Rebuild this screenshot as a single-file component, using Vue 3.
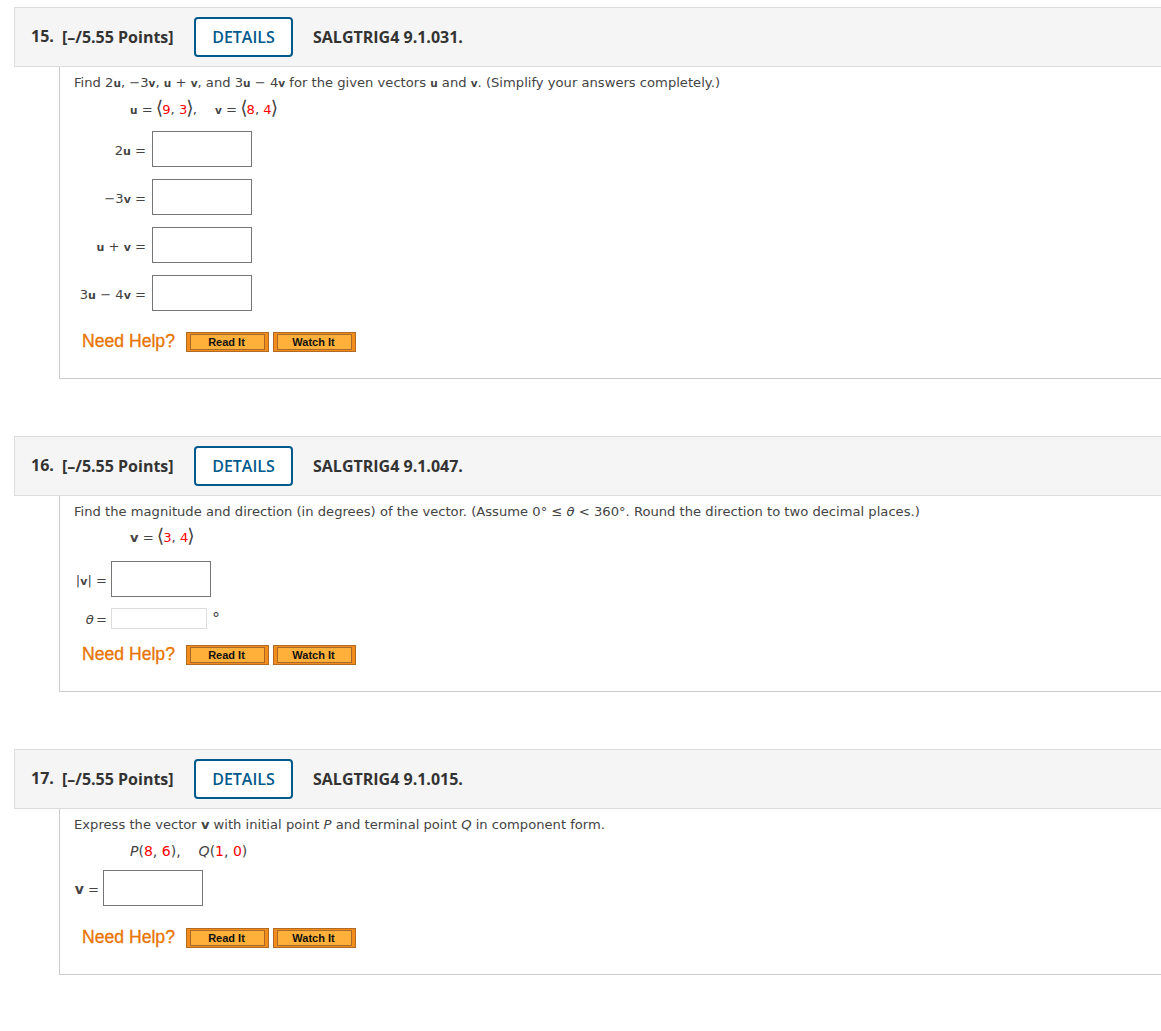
<template>
  <div class="page">
    <section class="question">
      <header class="q-head">
        <span class="q-num">15.</span>
        <span class="q-points">[–/5.55 Points]</span>
        <button class="details-btn">DETAILS</button>
        <span class="q-code">SALGTRIG4 9.1.031.</span>
      </header>
      <div class="q-body">
        <p class="prompt">Find 2<b>u</b>, −3<b>v</b>, <b>u</b> + <b>v</b>, and 3<b>u</b> − 4<b>v</b> for the given vectors <b>u</b> and <b>v</b>. (Simplify your answers completely.)</p>
        <p class="given first">
          <b>u</b> = <span class="ang">⟨</span><em>9</em>, <em>3</em><span class="ang">⟩</span>,<span class="sp"></span><b>v</b> = <span class="ang">⟨</span><em>8</em>, <em>4</em><span class="ang">⟩</span>
        </p>
        <div class="answers a15">
          <div class="row">
            <label class="lbl">2<b>u</b> =</label>
            <span class="box"></span>
          </div>
          <div class="row">
            <label class="lbl">−3<b>v</b> =</label>
            <span class="box"></span>
          </div>
          <div class="row">
            <label class="lbl"><b>u</b> + <b>v</b> =</label>
            <span class="box"></span>
          </div>
          <div class="row">
            <label class="lbl">3<b>u</b> − 4<b>v</b> =</label>
            <span class="box"></span>
          </div>
        </div>
        <div class="help">
          <span class="help-text">Need Help?</span>
          <button class="help-btn"><span>Read It</span></button>
          <button class="help-btn"><span>Watch It</span></button>
        </div>
      </div>
    </section>

    <section class="question">
      <header class="q-head">
        <span class="q-num">16.</span>
        <span class="q-points">[–/5.55 Points]</span>
        <button class="details-btn">DETAILS</button>
        <span class="q-code">SALGTRIG4 9.1.047.</span>
      </header>
      <div class="q-body">
        <p class="prompt">Find the magnitude and direction (in degrees) of the vector. (Assume 0° ≤ <i>θ</i> &lt; 360°. Round the direction to two decimal places.)</p>
        <p class="given">
          <b class="big">v</b> = <span class="ang">⟨</span><em>3</em>, <em>4</em><span class="ang">⟩</span>
        </p>
        <div class="answers a16">
          <div class="row">
            <label class="lbl">|<b>v</b>| =</label>
            <span class="box"></span>
          </div>
          <div class="row theta">
            <label class="lbl"><i>θ</i> =</label>
            <span class="box small"></span>
            <span class="deg">°</span>
          </div>
        </div>
        <div class="help">
          <span class="help-text">Need Help?</span>
          <button class="help-btn"><span>Read It</span></button>
          <button class="help-btn"><span>Watch It</span></button>
        </div>
      </div>
    </section>

    <section class="question">
      <header class="q-head">
        <span class="q-num">17.</span>
        <span class="q-points">[–/5.55 Points]</span>
        <button class="details-btn">DETAILS</button>
        <span class="q-code">SALGTRIG4 9.1.015.</span>
      </header>
      <div class="q-body">
        <p class="prompt">Express the vector <b class="big">v</b> with initial point <i>P</i> and terminal point <i>Q</i> in component form.</p>
        <p class="given wide">
          <i>P</i>(<em>8</em>, <em>6</em>),<span class="sp"></span><i>Q</i>(<em>1</em>, <em>0</em>)
        </p>
        <div class="answers a17">
          <div class="row">
            <label class="lbl"><b class="big">v</b> =</label>
            <span class="box"></span>
          </div>
        </div>
        <div class="help">
          <span class="help-text">Need Help?</span>
          <button class="help-btn"><span>Read It</span></button>
          <button class="help-btn"><span>Watch It</span></button>
        </div>
      </div>
    </section>
  </div>
</template>

<script setup>
</script>

<style scoped>
.page {
  padding: 7px 0 56px 14px;
  overflow: hidden;
  color: #444;
  font-family: "DejaVu Sans", Verdana, sans-serif;
  font-size: 13.13px;
}

.question {
  margin-bottom: 57px;
}

.question:last-child {
  margin-bottom: 0;
}

.q-head {
  display: flex;
  align-items: center;
  height: 60px;
  box-sizing: border-box;
  margin-right: -4px;
  padding-left: 16px;
  background: #f5f5f5;
  border: 1px solid #ddd;
  font-family: "Open Sans", sans-serif;
  font-size: 16px;
  font-weight: 700;
  color: #333;
}

.q-num {
  width: 31px;
  margin-top: -2px;
}

.q-points {
  width: 132px;
}

.details-btn {
  width: 99px;
  height: 40px;
  padding: 0;
  background: #fff;
  border: 2px solid #005a8c;
  border-radius: 4px;
  color: #005a8c;
  font: inherit;
  font-weight: 600;
}

.q-code {
  margin-left: 20px;
}

.q-body {
  margin-left: 45px;
  margin-right: -4px;
  padding-left: 14px;
  border-left: 1px solid #ccc;
  border-bottom: 1px solid #ccc;
}

.prompt {
  margin: 0;
  padding-top: 8px;
  line-height: 16px;
  white-space: nowrap;
}

.given {
  margin: 0;
  padding: 7px 0 0 56px;
  height: 22px;
  line-height: 22px;
  white-space: nowrap;
}

.given.first {
  padding-top: 8px;
}

.given.wide {
  font-size: 14px;
}

.prompt b,
.given b {
  font-size: 10.5px;
}

.lbl b {
  font-size: 11px;
}

b.big {
  font-size: 13px !important;
}

.lbl b.big {
  font-size: 14px !important;
}

em {
  font-style: normal;
  color: #f00;
}

.ang {
  font-size: 19px;
  line-height: 16px;
  margin: 0 -1px;
}

.sp {
  display: inline-block;
  width: 18px;
}

.answers {
  display: flex;
  flex-direction: column;
  gap: 12px;
  padding-top: 10px;
}

.a16 {
  padding-top: 12px;
  gap: 11px;
  margin-bottom: -5px;
}

.a17 {
  padding-top: 8px;
  margin-bottom: 1px;
}

.row {
  display: flex;
  align-items: center;
}

.lbl {
  flex: none;
  padding-top: 2px;
  text-align: right;
  white-space: nowrap;
}

.theta .lbl {
  word-spacing: -2px;
}

.a15 .lbl {
  width: 72px;
  margin-right: 6px;
}

.a16 .lbl {
  width: 33px;
  margin-right: 4px;
}

.a17 .lbl {
  width: 25px;
  margin-right: 4px;
}

.box {
  display: block;
  width: 100px;
  height: 36px;
  box-sizing: border-box;
  background: #fff;
  border: 1px solid #767676;
}

.box.small {
  width: 96px;
  height: 21px;
  border-color: #ddd;
}

.deg {
  margin-left: 5px;
  font-size: 16px;
}

.help {
  display: flex;
  align-items: center;
  gap: 4px;
  padding: 21px 0 26px 8px;
}

.help-text {
  width: 100px;
  margin-top: -2px;
  font-family: "Liberation Sans", Arial, sans-serif;
  font-size: 17.6px;
  -webkit-text-stroke: 0.3px #e87400;
  color: #e87400;
  line-height: 20px;
}

.help-btn {
  display: block;
  width: 83px;
  height: 20px;
  box-sizing: border-box;
  padding: 1px 3px;
  background: #f28c1c;
  border: 1px solid #b06a22;
}

.help-btn span {
  display: block;
  height: 14px;
  padding-right: 2px;
  background: #ffb03a;
  border: 1px solid #a8682a;
  line-height: 14px;
  font-family: "Liberation Sans", Arial, sans-serif;
  font-size: 11px;
  font-weight: 700;
  color: #111;
}
</style>
